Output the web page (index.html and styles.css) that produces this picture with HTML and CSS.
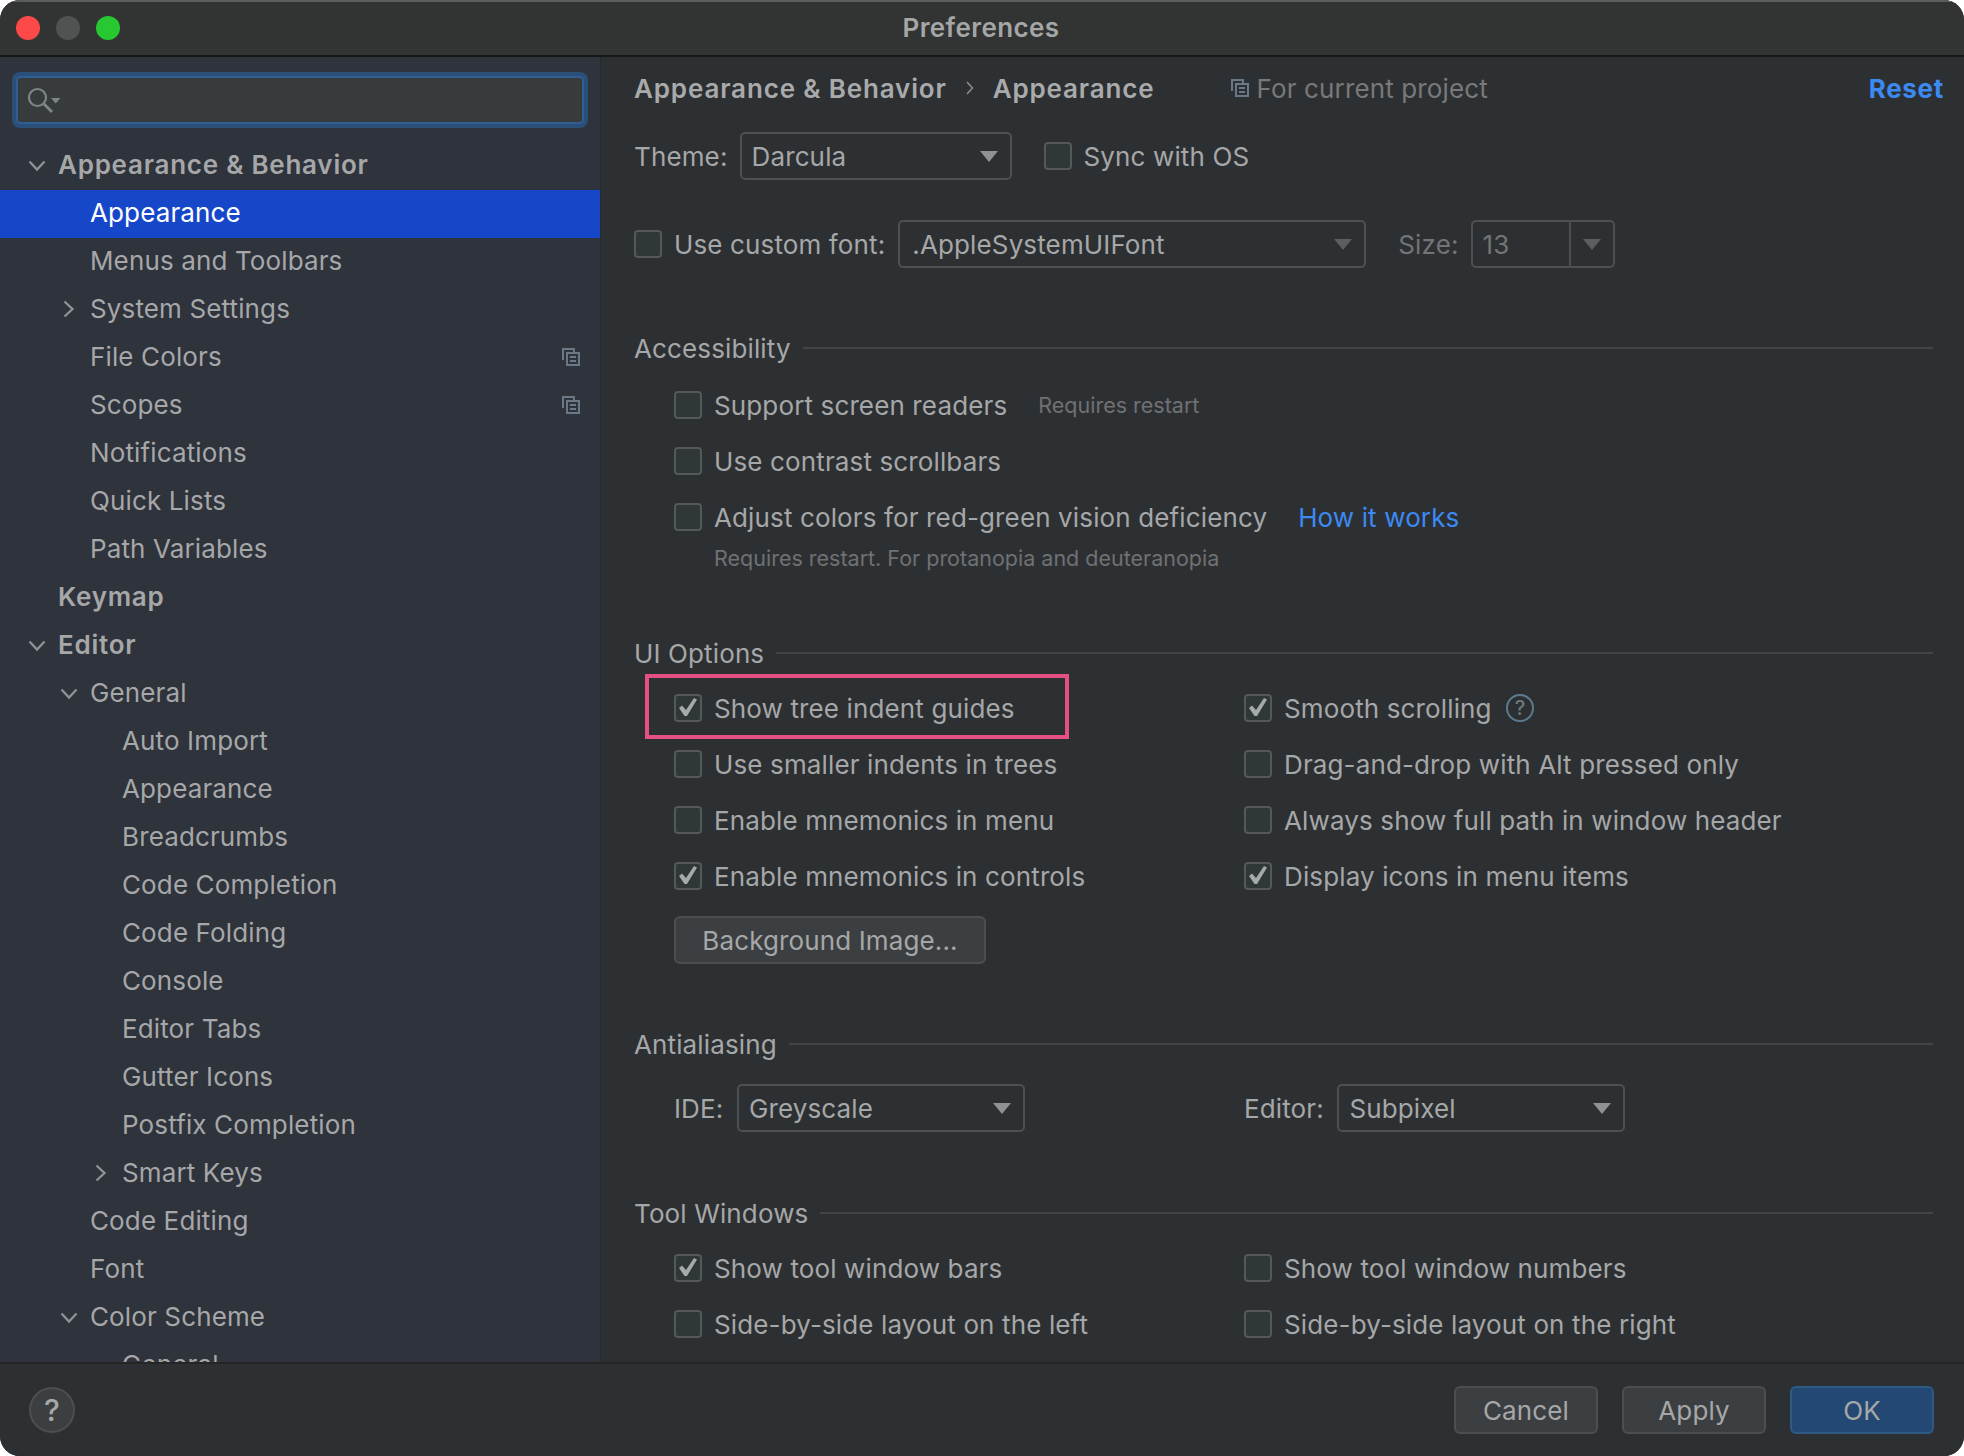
FILE: index.html
```html
<!DOCTYPE html>
<html lang="en">
<head>
<meta charset="utf-8">
<title>Preferences</title>
<link rel="stylesheet" href="styles.css">
</head>
<body>
<div class="window">
  <header class="titlebar">
    <div class="lights"><span class="light red"></span><span class="light grey"></span><span class="light green"></span></div>
    <div class="title">Preferences</div>
  </header>
  <div class="body">
    <aside class="sidebar">
      <div class="search">
        <svg class="search-icon" width="34" height="28" viewBox="0 0 34 28"><circle cx="9.500" cy="11.500" r="8.500" fill="none" stroke="#7e8588" stroke-width="2.200"/><path d="M16 18l8 8" stroke="#7e8588" stroke-width="2.800" fill="none"/><path d="M23 12h9.500l-4.750 5.500z" fill="#7e8588"/></svg>
      </div>
      <nav class="tree">
        <div class="row strong l0"><svg class="chev" width="18" height="12" viewBox="0 0 18 12"><path d="M1.500 1.500L9 9.500l7.500-8" /></svg><span>Appearance &amp; Behavior</span></div>
        <div class="row selected l1"><span>Appearance</span></div>
        <div class="row l1"><span>Menus and Toolbars</span></div>
        <div class="row l1"><svg class="chev right" width="12" height="18" viewBox="0 0 12 18"><path d="M1.500 1.500L9.500 9l-8 7.500" /></svg><span>System Settings</span></div>
        <div class="row l1"><span>File Colors</span><svg class="copy" width="18" height="18" viewBox="0 0 18 18"><path d="M1 12V1h11v3.500" fill="none" stroke="#6a7985" stroke-width="2"/><rect x="5" y="5" width="12" height="12" fill="none" stroke="#6a7985" stroke-width="2"/><path d="M8 9h6M8 13h6" stroke="#6a7985" stroke-width="1.800"/></svg></div>
        <div class="row l1"><span>Scopes</span><svg class="copy" width="18" height="18" viewBox="0 0 18 18"><path d="M1 12V1h11v3.500" fill="none" stroke="#6a7985" stroke-width="2"/><rect x="5" y="5" width="12" height="12" fill="none" stroke="#6a7985" stroke-width="2"/><path d="M8 9h6M8 13h6" stroke="#6a7985" stroke-width="1.800"/></svg></div>
        <div class="row l1"><span>Notifications</span></div>
        <div class="row l1"><span>Quick Lists</span></div>
        <div class="row l1"><span>Path Variables</span></div>
        <div class="row strong l0"><span>Keymap</span></div>
        <div class="row strong l0"><svg class="chev" width="18" height="12" viewBox="0 0 18 12"><path d="M1.500 1.500L9 9.500l7.500-8" /></svg><span>Editor</span></div>
        <div class="row l1"><svg class="chev" width="18" height="12" viewBox="0 0 18 12"><path d="M1.500 1.500L9 9.500l7.500-8" /></svg><span>General</span></div>
        <div class="row l2"><span>Auto Import</span></div>
        <div class="row l2"><span>Appearance</span></div>
        <div class="row l2"><span>Breadcrumbs</span></div>
        <div class="row l2"><span>Code Completion</span></div>
        <div class="row l2"><span>Code Folding</span></div>
        <div class="row l2"><span>Console</span></div>
        <div class="row l2"><span>Editor Tabs</span></div>
        <div class="row l2"><span>Gutter Icons</span></div>
        <div class="row l2"><span>Postfix Completion</span></div>
        <div class="row l2"><svg class="chev right" width="12" height="18" viewBox="0 0 12 18"><path d="M1.500 1.500L9.500 9l-8 7.500" /></svg><span>Smart Keys</span></div>
        <div class="row l1"><span>Code Editing</span></div>
        <div class="row l1"><span>Font</span></div>
        <div class="row l1"><svg class="chev" width="18" height="12" viewBox="0 0 18 12"><path d="M1.500 1.500L9 9.500l7.500-8" /></svg><span>Color Scheme</span></div>
        <div class="row l2"><span>General</span></div>
      </nav>
    </aside>
    <main class="content">
      <div class="crumbs">
        <span class="crumb">Appearance &amp; Behavior</span>
        <svg class="crumb-sep" width="8" height="14" viewBox="0 0 8 14"><path d="M1 1l5.500 6L1 13" fill="none" stroke="#8d8f91" stroke-width="1.500"/></svg>
        <span class="crumb">Appearance</span>
        <span class="project"><svg width="18" height="18" viewBox="0 0 18 18"><path d="M1 12V1h11v3.500" fill="none" stroke="#6a7985" stroke-width="2"/><rect x="5" y="5" width="12" height="12" fill="none" stroke="#6a7985" stroke-width="2"/><path d="M8 9h6M8 13h6" stroke="#6a7985" stroke-width="1.800"/></svg>For current project</span>
        <a class="reset">Reset</a>
      </div>

      <div class="form-row theme-row">
        <span class="label">Theme:</span>
        <div class="combo w-theme"><span>Darcula</span><i class="arrow"></i></div>
        <span class="check sync"><span class="box"></span>Sync with OS</span>
      </div>

      <div class="form-row font-row">
        <span class="check"><span class="box"></span>Use custom font:</span>
        <div class="combo w-font dim"><span class="font-val">.AppleSystemUIFont</span><i class="arrow"></i></div>
        <span class="label size-label">Size:</span>
        <div class="combo w-size dim"><span class="size-val">13</span><span class="size-btn"><i class="arrow"></i></span></div>
      </div>

      <div class="section sec-access"><span>Accessibility</span></div>
      <div class="opts">
        <div class="opt"><span class="box"></span>Support screen readers<span class="hint inline">Requires restart</span></div>
        <div class="opt"><span class="box"></span>Use contrast scrollbars</div>
        <div class="opt"><span class="box"></span>Adjust colors for red-green vision deficiency<a class="link">How it works</a></div>
      </div>
      <div class="hint sub">Requires restart. For protanopia and deuteranopia</div>

      <div class="section sec-ui"><span>UI Options</span></div>
      <div class="grid">
        <div class="opt marked"><span class="box checked"></span>Show tree indent guides<span class="mark"></span></div>
        <div class="opt"><span class="box checked"></span>Smooth scrolling<svg class="qmark" width="28" height="28" viewBox="0 0 28 28"><circle cx="14" cy="14" r="13" fill="none" stroke="#5d7a8c" stroke-width="2"/><text x="14" y="21" text-anchor="middle" class="qmark-text">?</text></svg></div>
        <div class="opt"><span class="box"></span>Use smaller indents in trees</div>
        <div class="opt"><span class="box"></span>Drag-and-drop with Alt pressed only</div>
        <div class="opt"><span class="box"></span>Enable mnemonics in menu</div>
        <div class="opt"><span class="box"></span>Always show full path in window header</div>
        <div class="opt"><span class="box checked"></span>Enable mnemonics in controls</div>
        <div class="opt"><span class="box checked"></span>Display icons in menu items</div>
      </div>
      <div class="btn bg-btn">Background Image...</div>

      <div class="section sec-anti"><span>Antialiasing</span></div>
      <div class="grid anti">
        <div class="form-row"><span class="label">IDE:</span><div class="combo w-ide"><span>Greyscale</span><i class="arrow"></i></div></div>
        <div class="form-row"><span class="label">Editor:</span><div class="combo w-ide"><span>Subpixel</span><i class="arrow"></i></div></div>
      </div>

      <div class="section sec-tool"><span>Tool Windows</span></div>
      <div class="grid tool">
        <div class="opt"><span class="box checked"></span>Show tool window bars</div>
        <div class="opt"><span class="box"></span>Show tool window numbers</div>
        <div class="opt"><span class="box"></span>Side-by-side layout on the left</div>
        <div class="opt"><span class="box"></span>Side-by-side layout on the right</div>
      </div>
    </main>
  </div>
  <footer class="footer">
    <div class="help">?</div>
    <div class="actions">
      <div class="btn action">Cancel</div>
      <div class="btn action">Apply</div>
      <div class="btn action primary">OK</div>
    </div>
  </footer>
</div>
</body>
</html>
```
FILE: styles.css
```css
* { box-sizing: border-box; }
html, body { margin: 0; padding: 0; background: #fff; }
body { width: 1964px; height: 1456px; overflow: hidden; font-family: Inter, "Liberation Sans", sans-serif; font-size: 26px; letter-spacing: 0.13px; color: #a6a7a8; }
.window { width: 1964px; height: 1456px; border-radius: 20px; overflow: hidden; display: flex; flex-direction: column; background: #2d3032; }
.titlebar { height: 57px; flex: none; background: #323433; border-top: 2px solid #5c5d5d; border-bottom: 2px solid #161718; display: flex; align-items: center; justify-content: center; position: relative; padding: 0 2px 2px 0; }
.lights { position: absolute; left: 16px; top: 14px; display: flex; gap: 16px; }
.light { width: 24px; height: 24px; border-radius: 50%; }
.red { background: #fd4a48; }
.grey { background: #515252; }
.green { background: #27c832; }
.title { font-weight: 600; font-size: 26px; letter-spacing: 0.4px; color: #a5a6a6; }

.body { flex: 1; min-height: 0; display: flex; }
.sidebar { width: 600px; flex: none; background: #2f333c; display: flex; flex-direction: column; overflow: hidden; }
.search { margin: 15px 12px 0; height: 56px; flex: none; border: 4px solid #2a4f79; box-shadow: inset 0 0 0 2px #2f5e95; border-radius: 8px; background: #383b3c; display: flex; align-items: center; padding-left: 12px; }
.search-icon { display: block; }
.tree { margin-top: 14px; }
.row { height: 48px; display: flex; align-items: center; position: relative; white-space: nowrap; padding-bottom: 3px; }
.l0 { padding-left: 58px; }
.l1 { padding-left: 90px; }
.l2 { padding-left: 122px; }
.strong { font-weight: 600; letter-spacing: 0.75px; }
.selected { background: #1647c9; color: #fff; }
.chev { position: absolute; fill: none; stroke: #909294; stroke-width: 2.300; }
.l0 .chev { left: 28px; top: 18px; }
.l1 .chev { left: 60px; top: 18px; }
.l1 .chev.right { left: 63px; top: 14px; }
.l2 .chev.right { left: 95px; top: 14px; }
.copy { position: absolute; left: 562px; top: 14px; }

.content { flex: 1; min-width: 0; padding-left: 33px; padding-right: 31px; border-left: 1px solid #272a2c; overflow: hidden; }
.crumbs { height: 64px; display: flex; align-items: center; padding-bottom: 2px; }
.crumb { font-weight: 600; letter-spacing: 0.85px; color: #a9aaab; }
.crumb-sep { margin: 0 19px; }
.project { display: flex; align-items: center; gap: 8px; margin-left: 76px; color: #77797b; }
.reset { margin-left: auto; margin-right: -11px; font-weight: 700; letter-spacing: 0.7px; color: #3c89f2; }

.form-row { display: flex; align-items: center; height: 48px; }
.theme-row { margin-top: 11px; }
.font-row { margin-top: 40px; }
.label { margin-right: 12px; }
.grid .label { margin-right: 13.500px; }
.combo { height: 48px; border: 2px solid #4d5052; border-radius: 5px; background: #2d3032; display: flex; align-items: center; justify-content: space-between; padding: 0 12px 0 10px; position: relative; }
.w-theme { width: 272px; }
.w-font { width: 468px; margin-left: 13px; }
.w-size { width: 144px; padding: 0 0 0 10px; }
.w-ide { width: 288px; }
.arrow { display: block; width: 0; height: 0; border-left: 9px solid transparent; border-right: 9px solid transparent; border-top: 11px solid #8f9192; }
.dim .arrow { border-top-color: #5c5e60; }
.font-val { padding-left: 2px; }
.size-val { color: #727476; }
.size-btn { width: 44px; height: 100%; border-left: 2px solid #4d5052; display: flex; align-items: center; justify-content: center; }
.size-label { margin-left: 32px; color: #727476; }
.check { display: inline-flex; align-items: center; }
.sync { margin-left: 32px; }
.box { width: 28px; height: 28px; flex: none; display: inline-block; margin-right: 12px; border: 2px solid #55585a; border-radius: 4px; background: #2f3737; position: relative; }
.box.checked::after { content: ""; position: absolute; left: 3px; top: 2px; width: 18px; height: 18px; background: #a6a8a9; clip-path: polygon(0 10px, 3px 7.500px, 7px 12px, 15px 0, 18px 1.500px, 8px 18px, 5.500px 18px); }

.section { display: flex; align-items: center; height: 40px; gap: 12px; }
.section::after { content: ""; flex: 1; height: 2px; background: #424547; }
.sec-access { margin-top: 60px; }
.sec-ui { margin-top: 62px; }
.sec-anti { margin-top: 60px; }
.sec-tool { margin-top: 61px; }
.opts { margin-top: 9px; padding-left: 40px; }
.opt { height: 56px; display: flex; align-items: center; white-space: nowrap; position: relative; }
.hint { font-size: 21.500px; letter-spacing: 0; color: #6f7173; }
.inline { margin-left: 31px; }
.link { margin-left: 31px; color: #3c89f2; }
.sub { padding-left: 80px; height: 26px; line-height: 26px; }
.grid { display: grid; grid-template-columns: 570px 1fr; padding-left: 40px; margin-top: 7px; }
.anti { margin-top: 20px; }
.mark { position: absolute; left: -29px; top: -6px; width: 424px; height: 65px; border: 4px solid #e64f86; }
.qmark { margin-left: 14px; }
.qmark-text { font-family: Inter, sans-serif; font-size: 20px; font-weight: 500; fill: #6d7880; }
.btn { height: 48px; border: 2px solid #4c4f51; border-radius: 6px; background: #3c3f41; display: flex; align-items: center; justify-content: center; }
.bg-btn { width: 312px; margin: 12px 0 0 40px; }

.footer { height: 94px; flex: none; background: #2d3032; border-top: 2px solid #252526; display: flex; align-items: center; justify-content: space-between; padding: 0 30px 0 29px; }
.help { width: 46px; height: 46px; border-radius: 50%; border: 2px solid #4c4f51; background: #3c3f41; display: flex; align-items: center; justify-content: center; font-size: 30px; font-weight: 500; color: #a6a7a8; }
.actions { display: flex; gap: 24px; }
.action { width: 144px; }
.primary { background: #234873; border-color: #2f5a85; }
```
